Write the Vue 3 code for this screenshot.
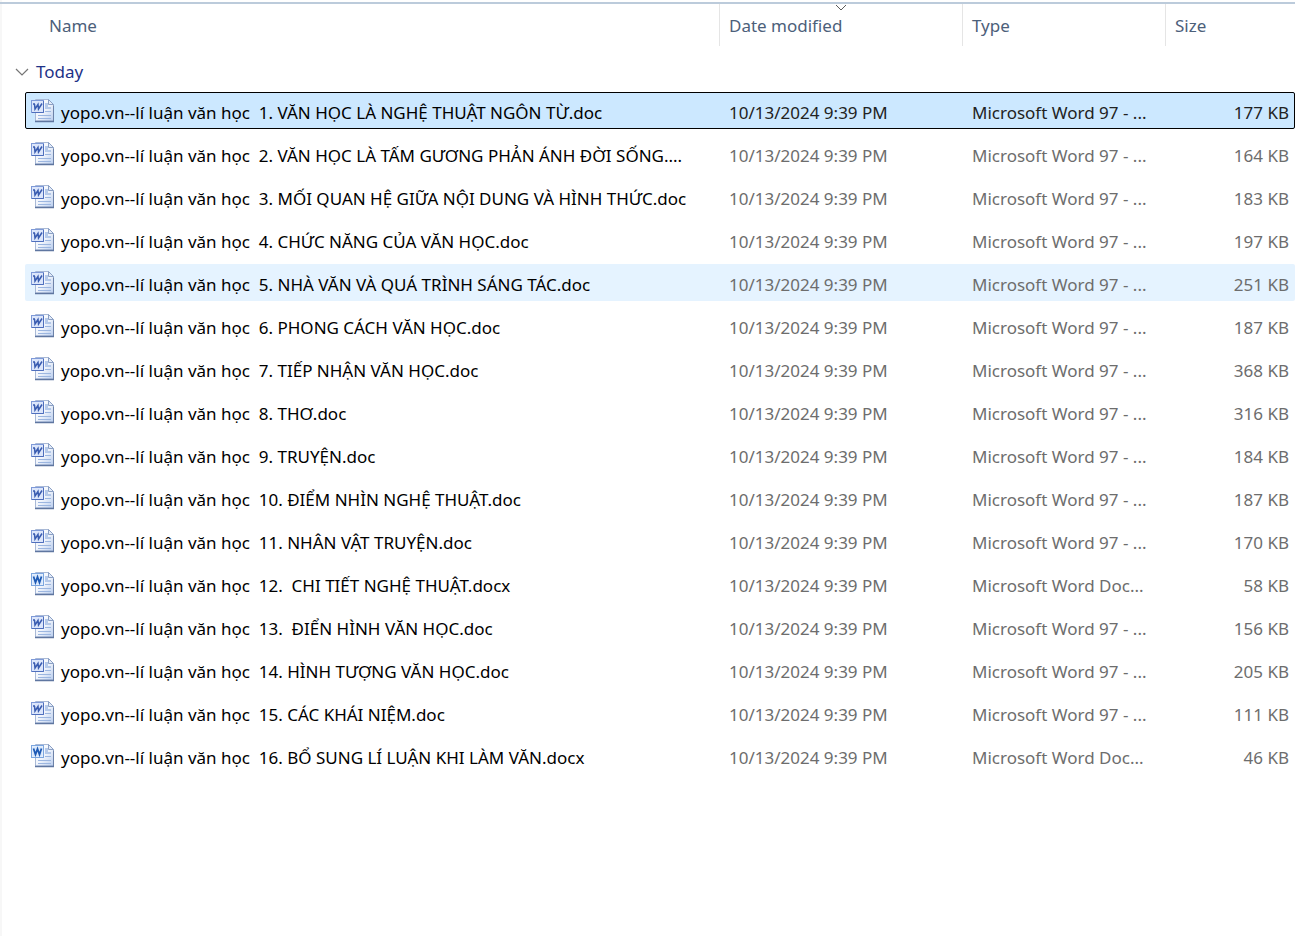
<script setup>
import { ref } from 'vue'

const prefix = 'yopo.vn--lí luận văn học  '
const rows = [
  ['1. VĂN HỌC LÀ NGHỆ THUẬT NGÔN TỪ.doc', 177],
  ['2. VĂN HỌC LÀ TẤM GƯƠNG PHẢN ÁNH ĐỜI SỐNG....', 164],
  ['3. MỐI QUAN HỆ GIỮA NỘI DUNG VÀ HÌNH THỨC.doc', 183],
  ['4. CHỨC NĂNG CỦA VĂN HỌC.doc', 197],
  ['5. NHÀ VĂN VÀ QUÁ TRÌNH SÁNG TÁC.doc', 251],
  ['6. PHONG CÁCH VĂN HỌC.doc', 187],
  ['7. TIẾP NHẬN VĂN HỌC.doc', 368],
  ['8. THƠ.doc', 316],
  ['9. TRUYỆN.doc', 184],
  ['10. ĐIỂM NHÌN NGHỆ THUẬT.doc', 187],
  ['11. NHÂN VẬT TRUYỆN.doc', 170],
  ['12.  CHI TIẾT NGHỆ THUẬT.docx', 58],
  ['13.  ĐIỂN HÌNH VĂN HỌC.doc', 156],
  ['14. HÌNH TƯỢNG VĂN HỌC.doc', 205],
  ['15. CÁC KHÁI NIỆM.doc', 111],
  ['16. BỔ SUNG LÍ LUẬN KHI LÀM VĂN.docx', 46],
]
const files = rows.map(([title, size]) => ({
  name: prefix + title,
  docx: title.endsWith('.docx'),
  size: size + ' KB',
}))
const open = ref(true)
const selected = ref(0)
const hovered = ref(4)
</script>

<template>
  <main class="pane">
    <table class="list">
      <thead>
        <tr class="row head">
          <th class="first"><button type="button">Name</button></th>
          <th>
            <button type="button">Date modified</button>
            <svg class="sort" width="12" height="7" viewBox="0 0 12 7" aria-hidden="true">
              <path d="M1 1l5 5 5-5" fill="none" stroke="#5c5c5c" />
            </svg>
          </th>
          <th><button type="button">Type</button></th>
          <th><button type="button">Size</button></th>
        </tr>
      </thead>
      <tbody>
        <tr class="group">
          <th scope="rowgroup">
            <button type="button" :aria-expanded="open" @click="open = !open">
              <svg width="14" height="8" viewBox="0 0 14 8" aria-hidden="true">
                <path d="M1 1l6 6 6-6" fill="none" stroke="#757575" stroke-width="1.2" />
              </svg>
              <span>Today</span>
            </button>
          </th>
        </tr>
        <template v-if="open">
          <tr
            v-for="(f, i) in files"
            :key="f.name"
            class="row file"
            :class="{ selected: i === selected, hovered: i === hovered }"
            @click="selected = i"
            @mouseenter="hovered = i"
          >
            <td class="name">
              <svg class="icon" width="24" height="24" viewBox="0 0 24 24" aria-hidden="true">
                <defs>
                  <linearGradient :id="'page' + i" x1="0" y1="0" x2="1" y2="1">
                    <stop offset="0" stop-color="#ffffff" />
                    <stop offset="0.5" stop-color="#f1f5fc" />
                    <stop offset="1" stop-color="#b9cdee" />
                  </linearGradient>
                </defs>
                <path d="M4.500 0.500H17.500L22.500 5.500V22H4.500z" :fill="'url(#page' + i + ')'" stroke="#a9b9d6" />
                <path d="M22.500 6.500V22.500" stroke="#6d82a8" />
                <path d="M4 22.500H23" stroke="#5f76a0" stroke-width="1.500" />
                <path d="M17.500 0.500V5.500H22.500z" fill="#e3ebf8" stroke="#8ba0c5" />
                <path d="M14 5h3M14 7h3M14 9h6" stroke="#a3bce4" stroke-width="1.500" />
                <path d="M14 12.500h6M7 16.500h13M7 19.500h13" stroke="#9cb6e0" />
                <template v-if="f.docx">
                  <rect x="0.500" y="1.500" width="12" height="12" fill="#edf4ff" stroke="#7ca6df" />
                  <rect x="1.500" y="2.500" width="10" height="10" fill="#d9e8fc" />
                  <path d="M2.500 4.500l2 6 2-5.500 2 5.500 2-6" fill="none" stroke="#1f5bb5" stroke-width="1.800" />
                </template>
                <template v-else>
                  <rect x="0.500" y="1.500" width="12" height="12" fill="#dce6fb" stroke="#7f9ad8" />
                  <path d="M12.500 2V13.500H1" fill="none" stroke="#4f6fbd" />
                  <path d="M2 5h2M3.500 5l0.500 5 3-4.500 0.500 4.500 3.500-5.500" fill="none" stroke="#3a5cb0" stroke-width="1.500" />
                </template>
              </svg>
              <span>{{ f.name }}</span>
            </td>
            <td>10/13/2024 9:39 PM</td>
            <td>{{ f.docx ? 'Microsoft Word Doc...' : 'Microsoft Word 97 - ...' }}</td>
            <td class="size">{{ f.size }}</td>
          </tr>
        </template>
      </tbody>
    </table>
  </main>
</template>

<style>
body {
  margin: 0;
  background: #fff;
}
</style>

<style scoped>
.pane {
  box-sizing: border-box;
  min-height: 100vh;
  padding-top: 2px;
  background: linear-gradient(to right, #f7f7f7 2px, #fff 2px);
  font: 17px/24px "Noto Sans", "Open Sans", sans-serif;
  color: #6d6d6d;
}
.list,
thead,
tbody {
  display: block;
}
.list {
  border-top: 2px solid #bccbdb;
}
.row {
  display: grid;
  grid-template-columns: minmax(0, 1fr) 243px 203px 130px;
  margin-left: 25px;
}
th,
td {
  box-sizing: border-box;
  padding: 0 0 0 10px;
  text-align: left;
  font-weight: 400;
  white-space: pre;
}
button {
  padding: 0;
  border: 0;
  background: none;
  color: inherit;
  font: inherit;
}
.head {
  height: 42px;
  color: #4c607a;
}
.head th {
  position: relative;
  padding: 10px 0 0 9px;
  border-left: 1px solid #e5e5e5;
}
.head .first {
  padding-left: 24px;
  border-left: 0;
}
.sort {
  position: absolute;
  top: 0;
  left: calc(50% - 6px);
}
.group {
  display: block;
  padding: 14px 0 8px 15px;
  color: #1e3287;
}
.group th {
  display: block;
  padding: 0;
}
.group button {
  display: flex;
  align-items: center;
  gap: 7px;
}
.file {
  box-sizing: border-box;
  height: 37px;
  margin-bottom: 6px;
  align-items: center;
  border-radius: 2px;
}
.file td {
  padding-top: 4px;
}
.file .name {
  display: flex;
  align-items: center;
  gap: 6px;
  padding-left: 6px;
  overflow: hidden;
  color: #000;
}
.icon {
  flex: none;
  margin-bottom: 4px;
}
.file .size {
  padding-right: 6px;
  text-align: right;
}
.hovered {
  background: #e5f3ff;
}
.selected {
  background: #cce8ff;
  color: #222;
  outline: 1px solid #000;
  outline-offset: -1px;
}
</style>
